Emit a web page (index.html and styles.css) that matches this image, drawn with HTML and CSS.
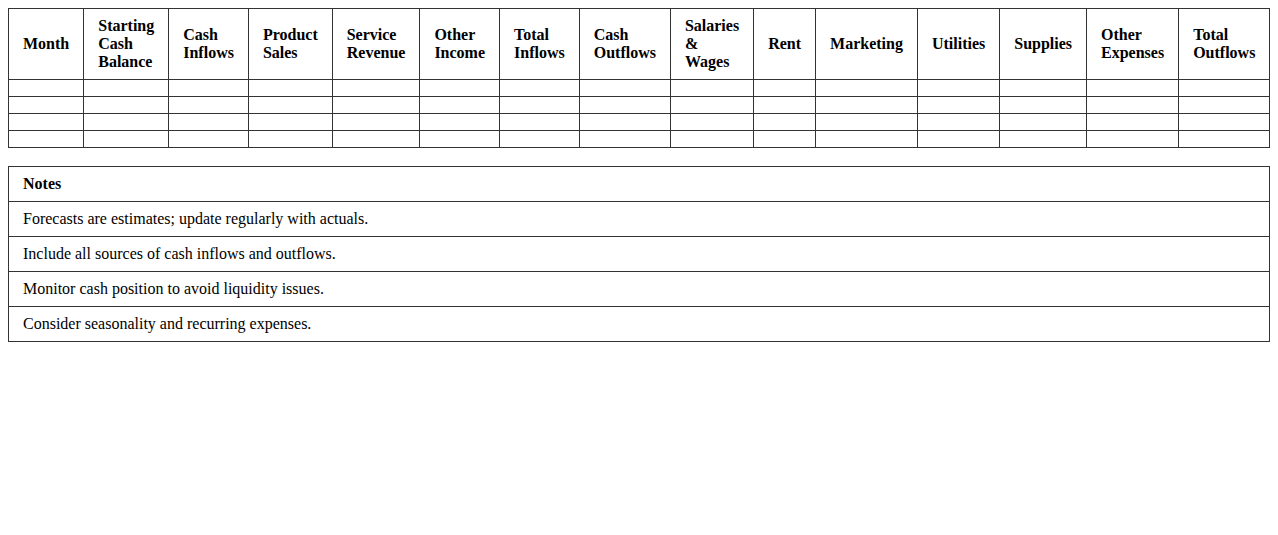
FILE: index.html
```html
<!DOCTYPE html>
<html>
<head>
<meta charset="utf-8">
<title>Cash Flow Forecast</title>
<link rel="stylesheet" href="styles.css">
</head>
<body>
<table class="grid">
  <thead>
    <tr>
      <th>Month</th>
      <th>Starting Cash Balance</th>
      <th>Cash Inflows</th>
      <th>Product Sales</th>
      <th>Service Revenue</th>
      <th>Other Income</th>
      <th>Total Inflows</th>
      <th>Cash Outflows</th>
      <th>Salaries &amp; Wages</th>
      <th>Rent</th>
      <th>Marketing</th>
      <th>Utilities</th>
      <th>Supplies</th>
      <th>Other Expenses</th>
      <th>Total Outflows</th>
      <th>Net Cash Flow</th>
      <th>Ending Cash Balance</th>
    </tr>
  </thead>
  <tbody>
    <tr><td></td><td></td><td></td><td></td><td></td><td></td><td></td><td></td><td></td><td></td><td></td><td></td><td></td><td></td><td></td><td></td><td></td></tr>
    <tr><td></td><td></td><td></td><td></td><td></td><td></td><td></td><td></td><td></td><td></td><td></td><td></td><td></td><td></td><td></td><td></td><td></td></tr>
    <tr><td></td><td></td><td></td><td></td><td></td><td></td><td></td><td></td><td></td><td></td><td></td><td></td><td></td><td></td><td></td><td></td><td></td></tr>
    <tr><td></td><td></td><td></td><td></td><td></td><td></td><td></td><td></td><td></td><td></td><td></td><td></td><td></td><td></td><td></td><td></td><td></td></tr>
  </tbody>
</table>
<table class="notes">
  <thead>
    <tr><th>Notes</th></tr>
  </thead>
  <tbody>
    <tr><td>Forecasts are estimates; update regularly with actuals.</td></tr>
    <tr><td>Include all sources of cash inflows and outflows.</td></tr>
    <tr><td>Monitor cash position to avoid liquidity issues.</td></tr>
    <tr><td>Consider seasonality and recurring expenses.</td></tr>
  </tbody>
</table>
</body>
</html>
```
FILE: styles.css
```css
html, body {
  background: #fff;
}
body {
  margin: 8px;
  font-family: "Liberation Serif", "Times New Roman", serif;
  font-size: 16px;
  color: #000;
  overflow: hidden;
}
table {
  border-collapse: collapse;
}
th, td {
  border: 1px solid #333;
  padding: 8px 14px;
  text-align: left;
  vertical-align: middle;
  line-height: 18px;
}
th {
  font-weight: bold;
}
.grid {
  margin-bottom: 18px;
}
.notes {
  width: 100%;
}
```
